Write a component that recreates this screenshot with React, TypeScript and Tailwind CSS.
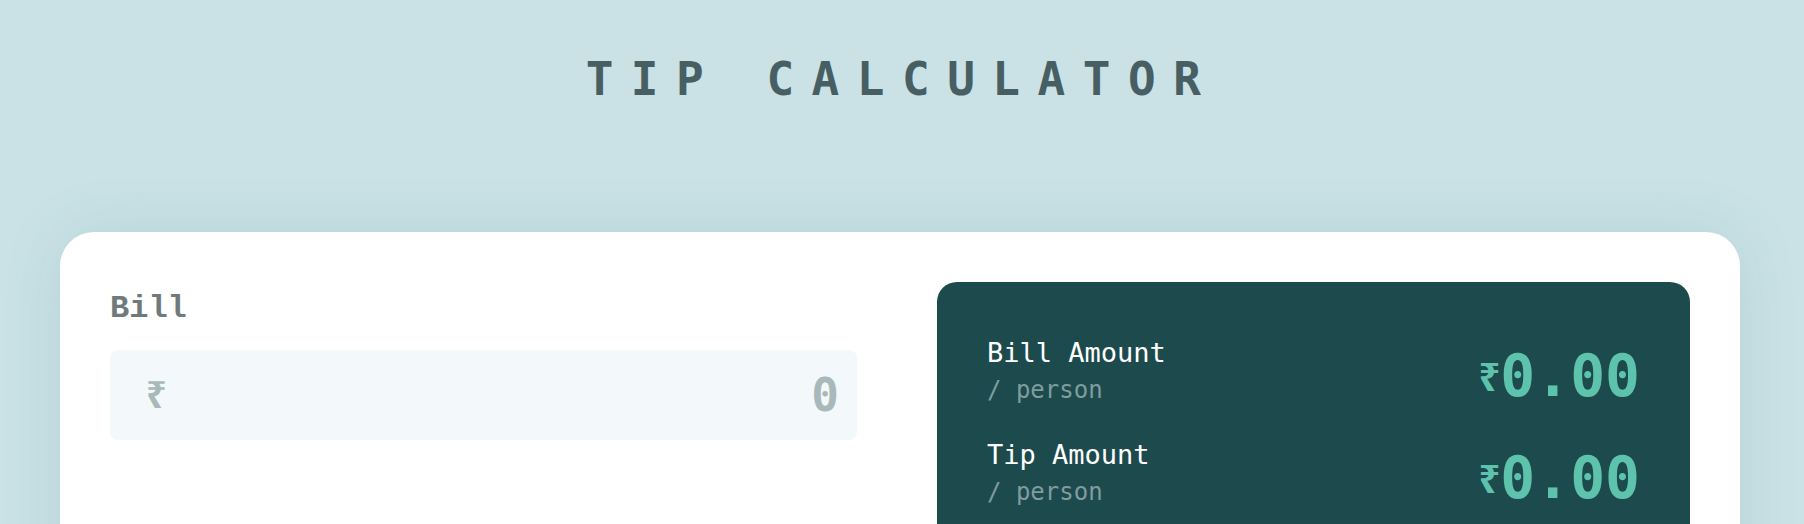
import React, { useState } from 'react';

const mono = "font-['DejaVu_Sans_Mono',monospace]";

function ResultRow({ label, amount }: { label: string; amount: string }) {
    return (
        <div className="flex items-center justify-between">
            <div>
                <div className="text-[27px] leading-[32px] text-white">{label}</div>
                <div className="mt-[6px] text-[24px] leading-[30px] text-[#7f9d9f]">/ person</div>
            </div>
            <div className="mt-[10px] flex items-center text-[#5ec3ac] font-bold">
                <span className="font-['Noto_Sans',sans-serif] text-[38px] leading-none">₹</span>
                <span className="text-[58px] leading-[58px]">{amount}</span>
            </div>
        </div>
    );
}

export default function App() {
    const [bill, setBill] = useState('');

    return (
        <div className={`min-h-screen overflow-hidden bg-[#cae2e6] ${mono}`}>
            <h1 className="pt-[56px] text-center text-[46px] font-bold leading-none tracking-[17.5px] text-[#475f62]">
                TIP CALCULATOR
            </h1>

            <div className="ml-[60px] mt-[130px] grid w-[1680px] grid-cols-[747px_753px] gap-[80px] rounded-[34px] bg-white p-[50px] shadow-[0_0_60px_rgba(60,120,130,0.14)]">
                {/* Inputs */}
                <div className="pt-[9px]">
                    <label htmlFor="bill" className="block font-['Liberation_Mono',monospace] text-[32px] font-bold leading-[36px] text-[#6f7b7b]">
                        Bill
                    </label>
                    <div className="mt-[23px] flex h-[90px] items-center rounded-lg bg-[#f3f8fb] pl-[36px] pr-[18px]">
                        <span className="font-['Noto_Sans',sans-serif] text-[36px] font-bold leading-none text-[#a9b9b9]">₹</span>
                        <input
                            id="bill"
                            value={bill}
                            onChange={(e) => setBill(e.target.value)}
                            placeholder="0"
                            className="min-w-0 flex-1 bg-transparent text-right text-[46px] font-bold text-[#1d4a4d] outline-none placeholder:text-[#a9b9b9]"
                        />
                    </div>
                </div>

                {/* Results */}
                <div className="min-h-[420px] rounded-[20px] bg-[#1d4a4d] px-[50px] pb-[50px] pt-[55px]">
                    <ResultRow label="Bill Amount" amount="0.00" />
                    <div className="mt-[34px]">
                        <ResultRow label="Tip Amount" amount="0.00" />
                    </div>
                </div>
            </div>
        </div>
    );
}
